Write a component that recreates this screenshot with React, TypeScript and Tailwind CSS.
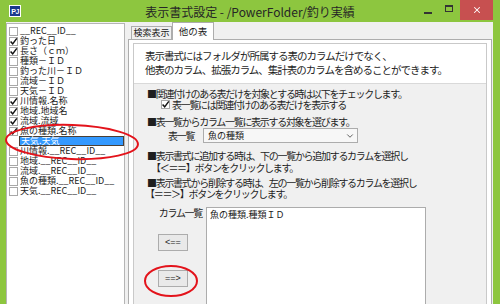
import React from "react";
import { ChevronDown, X } from "lucide-react";

const items: { t: string; c: boolean; sel?: boolean }[] = [
  { t: "__REC__ID__", c: false },
  { t: "釣った日", c: true },
  { t: "長さ（ｃｍ）", c: true },
  { t: "種類－ＩＤ", c: false },
  { t: "釣った川－ＩＤ", c: false },
  { t: "流域－ＩＤ", c: false },
  { t: "天気－ＩＤ", c: false },
  { t: "川情報.名称", c: true },
  { t: "地域.地域名", c: true },
  { t: "流域.流域", c: true },
  { t: "魚の種類.名称", c: true },
  { t: "天気.天気", c: false, sel: true },
  { t: "川情報.__REC__ID__", c: false },
  { t: "地域.__REC__ID__", c: false },
  { t: "流域.__REC__ID__", c: false },
  { t: "魚の種類.__REC__ID__", c: false },
  { t: "天気.__REC__ID__", c: false },
];

function Box({ checked }: { checked: boolean }) {
  return (
    <svg width="9" height="9" viewBox="0 0 9 9" className="shrink-0">
      <rect x="0.5" y="0.5" width="8" height="8" fill="#fff" stroke="#a8a8a8" />
      {checked && (
        <path d="M1.6 4.4 L3.7 6.9 L7.8 1.4" fill="none" stroke="#111" strokeWidth="1.5" />
      )}
    </svg>
  );
}

const line =
  "h-[11px] leading-[11px] text-[10px] tracking-[-1.3px] text-[#1e1e1e] whitespace-nowrap";

export default function App() {
  return (
    <div className="relative w-[500px] h-[304px] overflow-hidden bg-[#8dc63f] flex flex-col font-['Noto_Sans_CJK_JP',sans-serif]">
      {/* Title bar */}
      <div className="h-[22px] shrink-0 grid grid-cols-[1fr_auto_1fr]">
        <div className="flex items-start pl-[9px] pt-[5px]">
          <div className="w-[12px] h-[12px] bg-[#1b3a8c] border border-white flex items-center justify-center text-white text-[7px] font-bold leading-none tracking-[-0.5px] font-['Liberation_Sans',sans-serif]">
            PJ
          </div>
        </div>
        <div className="flex items-center justify-center text-[12px] text-[#262626] whitespace-nowrap pt-[1px]">
          表示書式設定 - /PowerFolder/釣り実績
        </div>
        <div className="flex items-start justify-end pr-[7px]">
          <div className="mt-[12px] w-[8px] h-[2px] bg-[#333]" />
          <div className="ml-[13px] mt-[5px] w-[8px] h-[7px] border border-[#333] border-t-2" />
          <div className="ml-[7px] w-[33px] h-[20px] bg-[#c75050] flex items-center justify-center">
            <X size={10} color="#fff" strokeWidth={2.5} />
          </div>
        </div>
      </div>

      {/* Body */}
      <div className="flex-1 min-h-0 ml-[6px] mr-[7px] bg-[#f0f0f0] flex overflow-hidden">
        {/* Left list */}
        <div className="w-[119px] mt-[1px] bg-white border border-[#b5b5b5] border-b-0 pt-[2px] pl-[2px] flex flex-col text-[9px] text-[#1a1a1a]">
          {items.map((it, i) =>
            it.sel ? (
              <div key={i} className="h-[10px] flex items-center">
                <div className="ml-[10px] flex-1 h-[10px] border border-[#4a4036] bg-[#3399ff] text-white leading-[8px] pl-[1px] whitespace-nowrap">
                  {it.t}
                </div>
              </div>
            ) : (
              <div key={i} className="h-[10px] leading-[10px] flex items-center gap-[2px] whitespace-nowrap">
                <Box checked={it.c} />
                <span>{it.t}</span>
              </div>
            )
          )}
        </div>

        {/* Tab control */}
        <div className="ml-[3px] w-[364px] flex flex-col">
          <div className="h-[17px] shrink-0 flex items-end pl-[3px]">
            <div className="w-[41px] h-[13px] border border-[#adadad] border-b-0 bg-[#f0f0f0] text-[9px] leading-[12px] text-center text-[#1a1a1a] whitespace-nowrap">
              検索表示
            </div>
            <div className="relative z-10 -mb-px w-[42px] h-[18px] border border-[#adadad] border-b-0 bg-white text-[9.5px] leading-[16px] text-center text-[#1a1a1a] whitespace-nowrap">
              他の表
            </div>
          </div>
          <div className="flex-1 border border-[#adadad] border-b-0 bg-white pt-[3px] px-[4px] flex flex-col min-h-0">
            <div className="flex-1 border border-[#c9c9c9] border-b-0 flex flex-col min-h-0">
              <div className="h-[40px] shrink-0 bg-white border-b border-[#d9d9d9] pl-[11px] pt-[5px] text-[10.5px] leading-[14px] tracking-[-1px] text-[#1e1e1e] whitespace-nowrap">
                <div>表示書式にはフォルダが所属する表のカラムだけでなく、</div>
                <div>他表のカラム、拡張カラム、集計表のカラムを含めることができます。</div>
              </div>
              <div className="flex-1 bg-[#f0f0f0] pt-[4px] pl-[13px] flex flex-col min-h-0">
                <div className={line}>■関連付けのある表だけを対象とする時は以下をチェックします。</div>
                <div className="h-[11px] flex items-center gap-[2px] ml-[14px]">
                  <Box checked={true} />
                  <span className={line}>表一覧には関連付けのある表だけを表示する</span>
                </div>
                <div className={line + " mt-[6px]"}>■表一覧からカラム一覧に表示する対象を選びます。</div>
                <div className="h-[15px] mt-[1px] flex items-center">
                  <span className={line + " ml-[21px] w-[35px]"}>表一覧</span>
                  <div className="w-[155px] h-[15px] border border-[#acacac] bg-[#f7f7f7] flex items-center justify-between pl-[4px] pr-[2px]">
                    <span className="text-[9px] leading-[13px] text-[#1a1a1a]">魚の種類</span>
                    <ChevronDown size={10} color="#444" strokeWidth={2} />
                  </div>
                </div>
                <div className={line + " mt-[7px]"}>■表示書式に追加する時は、下の一覧から追加するカラムを選択し</div>
                <div className={line + " mt-[1px] ml-[4px]"}>【＜＝＝】ボタンをクリックします。</div>
                <div className={line + " mt-[4px]"}>■表示書式から削除する時は、左の一覧から削除するカラムを選択し</div>
                <div className={line + " -ml-[2px]"}>【＝＝＞】ボタンをクリックします。</div>
                <div className="mt-[8px] flex">
                  <div className="w-[59px] shrink-0 flex flex-col">
                    <div className={line + " h-[12px] leading-[12px] text-right pr-[4px]"}>カラム一覧</div>
                    <div className="mt-[15px] ml-[11px] w-[30px] h-[17px] border border-[#acacac] bg-[#e9e9e9] flex items-center justify-center text-[9px] text-[#222] font-['Liberation_Sans',sans-serif]">
                      &lt;==
                    </div>
                    <div className="mt-[19px] ml-[11px] w-[30px] h-[17px] border border-[#acacac] bg-[#e9e9e9] flex items-center justify-center text-[9px] text-[#222] font-['Liberation_Sans',sans-serif]">
                      ==&gt;
                    </div>
                  </div>
                  <div className="w-[220px] h-[110px] border border-[#acacac] bg-white pl-[3px] pt-[1px] text-[9px] leading-[11px] text-[#1a1a1a] whitespace-nowrap">
                    魚の種類.種類ＩＤ
                  </div>
                </div>
              </div>
            </div>
          </div>
        </div>
      </div>

      {/* Red annotation ellipses */}
      <svg className="absolute inset-0 pointer-events-none" width="500" height="304" viewBox="0 0 500 304">
        <ellipse cx="72" cy="142" rx="66" ry="17" transform="rotate(2 72 142)" fill="none" stroke="#e3131b" strokeWidth="2" />
        <ellipse cx="171" cy="281" rx="26" ry="15" fill="none" stroke="#e3131b" strokeWidth="2" />
      </svg>
    </div>
  );
}
